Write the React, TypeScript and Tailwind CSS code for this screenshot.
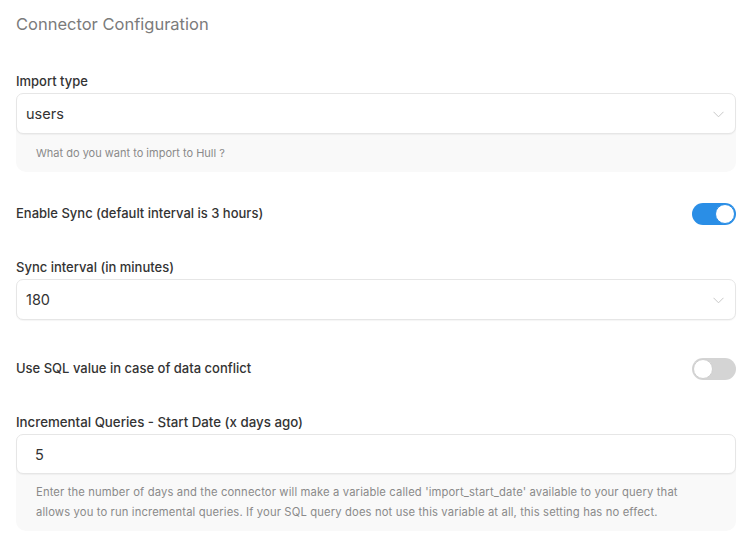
import React from "react";

function Chevron() {
  return (
    <svg width="11" height="7" viewBox="0 0 11 7" className="shrink-0">
      <path d="M0.5 0.8 L5.5 5.8 L10.5 0.8" fill="none" stroke="#c8c8c8" strokeWidth="1" />
    </svg>
  );
}

function Toggle({ on }: { on: boolean }) {
  return (
    <div
      className={
        "relative w-[44px] h-[22px] rounded-full " + (on ? "bg-[#2a8ee6]" : "bg-[#d4d4d4]")
      }
    >
      <div
        className={
          "absolute top-[1px] w-[20px] h-[20px] rounded-full bg-white " +
          (on ? "right-[1px] border border-[#2a8ee6]" : "left-[1px] border border-[#cfcfcf]")
        }
      />
    </div>
  );
}

export default function App() {
  return (
    <div
      className="w-[754px] h-[554px] bg-white px-4 text-[#333]"
      style={{ fontFamily: "Inter, 'Noto Sans', sans-serif" }}
    >
      <div className="pt-[12px] text-[16.5px] leading-[24px] text-[#7b7b7b]">Connector Configuration</div>

      <div className="mt-[35px] text-[13px] leading-[20px] font-medium text-[#333]">Import type</div>
      <div className="mt-[2px] w-[720px] rounded-[10px] bg-[#f9f9f9]">
        <div className="h-[41px] flex items-center justify-between rounded-[7px] border border-[#e6e6e6] bg-white pl-[9px] pr-[11px] pt-[1px] shadow-[0_1px_1px_rgba(0,0,0,0.04)]">
          <span className="text-[14.5px] text-[#333]">users</span>
          <Chevron />
        </div>
        <div className="px-[20px] pt-[9px] pb-[9px] text-[11px] leading-[20px] text-[#8a8a8a]">
          What do you want to import to Hull ?
        </div>
      </div>

      <div className="mt-[31px] w-[720px] h-[22px] flex items-center justify-between">
        <span className="text-[13px] font-medium text-[#333]">Enable Sync (default interval is 3 hours)</span>
        <Toggle on={true} />
      </div>

      <div className="mt-[32px] text-[13px] leading-[20px] font-medium text-[#333]">Sync interval (in minutes)</div>
      <div className="mt-[2px] w-[720px] h-[41px] flex items-center justify-between rounded-[7px] border border-[#e6e6e6] bg-white pl-[9px] pr-[11px] pt-[1px] shadow-[0_1px_1px_rgba(0,0,0,0.04)]">
        <span className="text-[14.5px] text-[#333]">180</span>
        <Chevron />
      </div>

      <div className="mt-[38px] w-[720px] h-[22px] flex items-center justify-between">
        <span className="text-[13px] font-medium text-[#333]">Use SQL value in case of data conflict</span>
        <Toggle on={false} />
      </div>

      <div className="mt-[32px] text-[13.3px] leading-[20px] font-medium text-[#333]">
        Incremental Queries - Start Date (x days ago)
      </div>
      <div className="mt-[2px] w-[720px] rounded-[10px] bg-[#f9f9f9]">
        <div className="h-[40px] flex items-center rounded-[7px] border border-[#e6e6e6] bg-white pl-[18px] pt-[1px] shadow-[0_1px_1px_rgba(0,0,0,0.04)]">
          <span className="text-[14.5px] text-[#333]">5</span>
        </div>
        <div className="px-[20px] pt-[8px] pb-[9px] text-[11.25px] tracking-[0.13px] leading-[20px] text-[#8a8a8a] whitespace-nowrap">
          Enter the number of days and the connector will make a variable called 'import_start_date' available to your query that
          <br />
          allows you to run incremental queries. If your SQL query does not use this variable at all, this setting has no effect.
        </div>
      </div>
    </div>
  );
}
